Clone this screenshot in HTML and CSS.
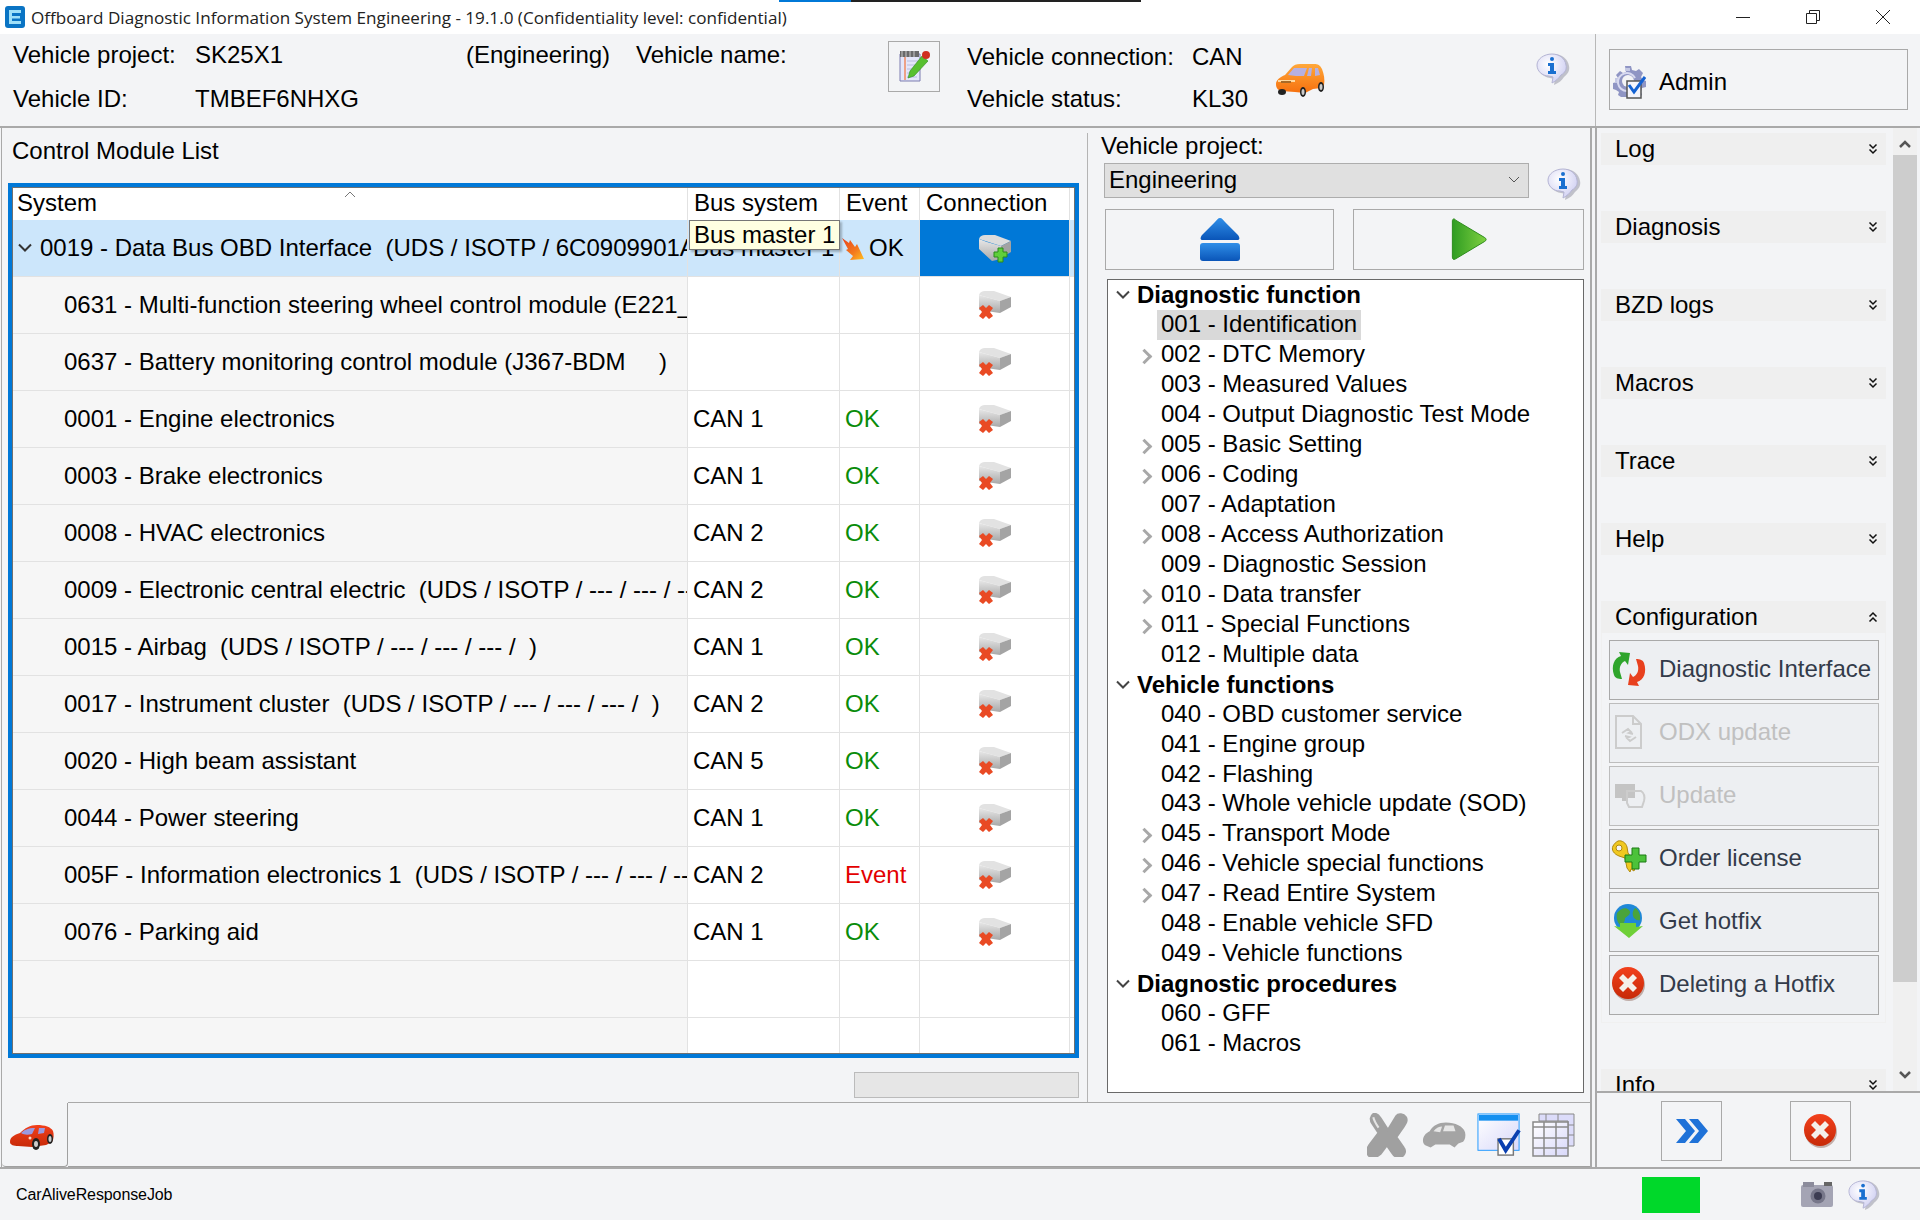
FILE: index.html
```html
<!DOCTYPE html>
<html lang="en">
<head>
    <meta charset="UTF-8">
    <title>Offboard Diagnostic Information System Engineering</title>
    <link rel="stylesheet" href="styles.css">
</head>
<body>
    <svg class="defs" width="0" height="0">
        <defs>
            <linearGradient id="gBlue" x1="0" y1="0" x2="0" y2="1"><stop offset="0" stop-color="#2f8ee8"/><stop offset="1" stop-color="#0a55b8"/></linearGradient>
            <linearGradient id="gGreen" x1="0" y1="0" x2="1" y2="0"><stop offset="0" stop-color="#2f9c22"/><stop offset="1" stop-color="#7ed040"/></linearGradient>
            <linearGradient id="gBox" x1="0" y1="0" x2="0" y2="1"><stop offset="0" stop-color="#e8e8e8"/><stop offset="1" stop-color="#a8a8a8"/></linearGradient>
            <linearGradient id="gRed" x1="0" y1="0" x2="0" y2="1"><stop offset="0" stop-color="#f2401c"/><stop offset="1" stop-color="#c72a08"/></linearGradient>
            <linearGradient id="gOrange" x1="0" y1="0" x2="0" y2="1"><stop offset="0" stop-color="#ffa83a"/><stop offset="1" stop-color="#f6700e"/></linearGradient>
            <radialGradient id="gBubble" cx="0.4" cy="0.35" r="0.7"><stop offset="0" stop-color="#fff"/><stop offset="1" stop-color="#cfcff2"/></radialGradient>
            <linearGradient id="gSheet" x1="0" y1="0" x2="1" y2="1"><stop offset="0" stop-color="#fff"/><stop offset="1" stop-color="#d8d8fa"/></linearGradient>
            <linearGradient id="gFlame" x1="0" y1="0" x2="1" y2="1"><stop offset="0" stop-color="#e8431c"/><stop offset=".6" stop-color="#f47a1e"/><stop offset="1" stop-color="#ffc020"/></linearGradient>

            <symbol id="i-info" viewBox="0 0 34 34">
                <path d="M17 2C8 2 1 7 1 14c0 6 5 11 12 12l5 1-1 6c5-2 8-5 10-8 4-3 6-7 5-11-1-7-7-12-15-12z" fill="#8e8e9e" opacity=".5" transform="translate(1 0)"/>
                <path d="M16 2C8 2 1 7 1 13c0 6 5 11 12 11l4 1-1 6c4-2 7-5 9-8 4-2 6-6 5-10-1-7-7-11-14-11z" fill="url(#gBubble)" stroke="#b4b4d4"/>
                <circle cx="16" cy="7" r="2" fill="#1a6fd0"/>
                <path d="M12 11h6v8h2v3h-8v-3h2v-5h-2z" fill="#1a6fd0"/>
            </symbol>
            <symbol id="i-box" viewBox="0 0 34 28">
                <path d="M1 5C2 2 4 1 7 1h10l16 6-10 5z" fill="#dcdcdc"/>
                <path d="M1 5l8 3 14 4v13l-9 2-13-12z" fill="url(#gBox)"/>
                <path d="M23 12l10-5v11l-10 6z" fill="#a2a2a2"/>
            </symbol>
            <symbol id="i-boxx" viewBox="0 0 34 30">
                <path d="M1 5C2 2 4 1 7 1h9l17 6-11 4z" fill="#e2e2e2"/>
                <path d="M1 5l21 6v12L1 20z" fill="url(#gBox)"/>
                <path d="M22 11l11-4v10l-11 6z" fill="#a4a4a4"/>
                <path d="M1 18l4-3 3 3 3-3 4 3-3 4 3 4-4 3-3-3-3 3-4-3 3-4z" fill="#e94a24"/>
            </symbol>
            <symbol id="i-boxplus" viewBox="0 0 34 28">
                <use href="#i-box" width="34" height="28"/>
                <path d="M20 14h5v4h4v5h-4v5h-5v-5h-4v-5h4z" fill="#5fcf3a" stroke="#2a8a1a"/>
            </symbol>
            <symbol id="i-redx" viewBox="0 0 36 36">
                <circle cx="18" cy="19" r="16" fill="#6a3020" opacity=".35"/>
                <circle cx="17" cy="17" r="16" fill="url(#gRed)"/>
                <path d="M8 12l4-4 5 5 5-5 4 4-5 5 5 5-4 4-5-5-5 5-4-4 5-5z" fill="#f4f0ea"/>
            </symbol>
            <symbol id="i-car" viewBox="0 0 50 34">
                <path d="M1 21c0-4 4-7 9-9l7-8c2-2 4-3 8-3h14c4 0 6 1 8 5 2 5 3 11 2 16l-3 3-8 1-8 4-10-1-14-1c-3-1-5-3-5-7z" fill="url(#gOrange)"/>
                <path d="M13 12l6-7h13l-3 8c-5 0-11 0-16-1zM34 5h3l-1 8h-4zM40 5h3l2 7-5 1z" fill="#b6b0e0"/>
                <path d="M3 17h17v2H3z" fill="#ffd9a0"/><path d="M6 18h10v2H6z" fill="#a86a28"/>
                <ellipse cx="7" cy="29" rx="4" ry="3" fill="#222"/><ellipse cx="28" cy="29" rx="3" ry="5" fill="#222"/><ellipse cx="46" cy="24" rx="3" ry="5" fill="#222"/>
                <ellipse cx="28" cy="29" rx="1.500" ry="3" fill="#ccc"/><ellipse cx="46" cy="24" rx="1.500" ry="3" fill="#ccc"/>
            </symbol>
            <symbol id="i-redcar" viewBox="0 0 44 26">
                <path d="M0 18c0-5 4-7 10-9 5-5 10-8 17-8 8 0 14 2 16 6 1 3 1 8-1 11l-6 3-14 2-14-1c-4 0-8-1-8-4z" fill="url(#gRed)"/>
                <path d="M11 9c3-3 7-5 14-5l-3 6c-4 1-8 1-11-1zM29 4h6l-1 5-6 1z" fill="#9a9ae0"/>
                <circle cx="20" cy="14" r="1.500" fill="#ffd8c0"/>
                <ellipse cx="26" cy="20" rx="4" ry="6" fill="#222"/><ellipse cx="40" cy="15" rx="3" ry="5" fill="#222"/>
                <ellipse cx="26" cy="20" rx="2" ry="3" fill="#ccc"/><ellipse cx="40" cy="15" rx="1.500" ry="3" fill="#ccc"/>
            </symbol>
            <symbol id="i-dchev" viewBox="0 0 10 12">
                <path d="M1.500 1.500L5 5l3.500-3.500M1.500 6.500L5 10l3.500-3.500" stroke="#111" stroke-width="1.500" fill="none"/>
            </symbol>
        </defs>
    </svg>

    <div class="progress"><span class="progress-blue"></span><span class="progress-dark"></span></div>

    <div class="titlebar">
        <svg class="logo" viewBox="0 0 20 22"><rect width="20" height="22" rx="3" fill="#0a74c4"/><path d="M4 4h12v3H7v3h8v2.500H7V15h9v3H4z" fill="#9fe0f8"/></svg>
        <span class="title-text">Offboard Diagnostic Information System Engineering - 19.1.0 (Confidentiality level: confidential)</span>
        <div class="win-btns">
            <svg class="win-btn" viewBox="0 0 16 16"><path d="M1 8.500h14" stroke="#222" fill="none"/></svg>
            <svg class="win-btn" viewBox="0 0 16 16"><path d="M1.500 4.500h10v10h-10zM4.500 4.500v-3h10v10h-3" stroke="#222" fill="none"/></svg>
            <svg class="win-btn" viewBox="0 0 16 16"><path d="M1 1l14 14M15 1L1 15" stroke="#222" fill="none"/></svg>
        </div>
    </div>

    <div class="top">
        <div class="header">
            <div class="veh-info">
                <span>Vehicle project:</span><span>SK25X1</span><span>(Engineering)</span><span>Vehicle name:</span>
                <span>Vehicle ID:</span><span>TMBEF6NHXG</span><span></span><span></span>
            </div>
            <div class="edit-btn">
                <svg viewBox="0 0 32 33" width="32" height="33">
                    <path d="M2 4h20v27H2z" fill="#e4e6fa" stroke="#7c7cb0"/>
                    <path d="M7 5v25" stroke="#f08a60" stroke-width="1.500"/>
                    <path d="M9 11h11M9 15h9M9 19h7M9 23h6M9 27h10" stroke="#b8bce0"/>
                    <path d="M2 1h19v6H2z" fill="#6a6a6a"/>
                    <path d="M4 1v6M8 1v6M12 1v6M16 1v6" stroke="#c8c8c8"/>
                    <path d="M12 21L24 6l6 5-14 15-6 2z" fill="#58c030" stroke="#2f8a1c" stroke-width=".6"/>
                    <circle cx="28" cy="5" r="4" fill="#d03020"/>
                </svg>
            </div>
            <div class="conn-info">
                <span>Vehicle connection:</span><span>CAN</span>
                <span>Vehicle status:</span><span>KL30</span>
            </div>
            <svg class="ico-car"><use href="#i-car"/></svg>
            <svg class="ico-info-top"><use href="#i-info"/></svg>
        </div>
        <div class="admin">
            <div class="admin-btn">
                <svg class="ico-admin" viewBox="0 0 34 34">
                    <path d="M13 1h6l1 4 4 1 3-2 4 4-2 4 2 3 3 1v6l-4 1-1 4 1 3-3 2-18 0-3-2 1-3-3-2-3-1v-6l4-1 1-4-2-3 4-4 3 2 3-1z" fill="#8f95c4"/>
                    <path d="M13 3h5v3h-5zM3 13h3v5H3z" fill="#c4c8e4"/>
                    <path d="M23 13a9 9 0 1 0-8 13" fill="none" stroke="#d8daf0" stroke-width="2"/>
                    <circle cx="16" cy="16" r="6" fill="#f3f4f6"/>
                    <path d="M15 16h14v17H15z" fill="#f4f4fb" stroke="#555" stroke-width="1.500"/>
                    <path d="M17 20l5 7L33 12" stroke="#1462d2" stroke-width="3" fill="none"/>
                </svg>
                <span class="admin-text">Admin</span>
            </div>
        </div>
    </div>

    <div class="main">
        <div class="left">
            <div class="work">
                <div class="list-col">
                    <div class="list-title">Control Module List</div>
                    <div class="grid">
                        <div class="grid-inner">
                            <div class="row row-head">
                                <div class="cell sys"><span>System</span><svg class="sort" viewBox="0 0 12 8"><path d="M1 7l5-5 5 5" stroke="#777" fill="none"/></svg></div>
                                <div class="cell">Bus system</div>
                                <div class="cell">Event</div>
                                <div class="cell">Connection</div>
                                <div class="cell"></div>
                            </div>
                            <div class="row row-sel">
                                <div class="cell sys first"><svg class="chev" viewBox="0 0 14 10"><path d="M1 1.500l6 6 6-6" stroke="#333" stroke-width="2" fill="none"/></svg><span>0019 - Data Bus OBD Interface  (UDS / ISOTP / 6C0909901AD</span></div>
                                <div class="cell">Bus master 1</div>
                                <div class="cell cell-ok"><svg class="flame" viewBox="0 0 22 22"><path d="M0 0l7 5 1-3 5 7 2-3 7 15-14 1 3-4-7-6 2-1z" fill="url(#gFlame)"/></svg>OK</div>
                                <div class="cell conn conn-sel"><svg class="ico-conn"><use href="#i-boxplus"/></svg></div>
                                <div class="cell"></div>
                            </div>
                            <div class="row">
                                <div class="cell sys">0631 - Multi-function steering wheel control module (E221_</div>
                                <div class="cell"></div><div class="cell"></div>
                                <div class="cell conn"><svg class="ico-conn"><use href="#i-boxx"/></svg></div><div class="cell"></div>
                            </div>
                            <div class="row">
                                <div class="cell sys">0637 - Battery monitoring control module (J367-BDM     )</div>
                                <div class="cell"></div><div class="cell"></div>
                                <div class="cell conn"><svg class="ico-conn"><use href="#i-boxx"/></svg></div><div class="cell"></div>
                            </div>
                            <div class="row">
                                <div class="cell sys">0001 - Engine electronics</div>
                                <div class="cell">CAN 1</div><div class="cell ok">OK</div>
                                <div class="cell conn"><svg class="ico-conn"><use href="#i-boxx"/></svg></div><div class="cell"></div>
                            </div>
                            <div class="row">
                                <div class="cell sys">0003 - Brake electronics</div>
                                <div class="cell">CAN 1</div><div class="cell ok">OK</div>
                                <div class="cell conn"><svg class="ico-conn"><use href="#i-boxx"/></svg></div><div class="cell"></div>
                            </div>
                            <div class="row">
                                <div class="cell sys">0008 - HVAC electronics</div>
                                <div class="cell">CAN 2</div><div class="cell ok">OK</div>
                                <div class="cell conn"><svg class="ico-conn"><use href="#i-boxx"/></svg></div><div class="cell"></div>
                            </div>
                            <div class="row">
                                <div class="cell sys">0009 - Electronic central electric  (UDS / ISOTP / --- / --- / --- /  )</div>
                                <div class="cell">CAN 2</div><div class="cell ok">OK</div>
                                <div class="cell conn"><svg class="ico-conn"><use href="#i-boxx"/></svg></div><div class="cell"></div>
                            </div>
                            <div class="row">
                                <div class="cell sys">0015 - Airbag  (UDS / ISOTP / --- / --- / --- /  )</div>
                                <div class="cell">CAN 1</div><div class="cell ok">OK</div>
                                <div class="cell conn"><svg class="ico-conn"><use href="#i-boxx"/></svg></div><div class="cell"></div>
                            </div>
                            <div class="row">
                                <div class="cell sys">0017 - Instrument cluster  (UDS / ISOTP / --- / --- / --- /  )</div>
                                <div class="cell">CAN 2</div><div class="cell ok">OK</div>
                                <div class="cell conn"><svg class="ico-conn"><use href="#i-boxx"/></svg></div><div class="cell"></div>
                            </div>
                            <div class="row">
                                <div class="cell sys">0020 - High beam assistant</div>
                                <div class="cell">CAN 5</div><div class="cell ok">OK</div>
                                <div class="cell conn"><svg class="ico-conn"><use href="#i-boxx"/></svg></div><div class="cell"></div>
                            </div>
                            <div class="row">
                                <div class="cell sys">0044 - Power steering</div>
                                <div class="cell">CAN 1</div><div class="cell ok">OK</div>
                                <div class="cell conn"><svg class="ico-conn"><use href="#i-boxx"/></svg></div><div class="cell"></div>
                            </div>
                            <div class="row">
                                <div class="cell sys">005F - Information electronics 1  (UDS / ISOTP / --- / --- / --- /  )</div>
                                <div class="cell">CAN 2</div><div class="cell event">Event</div>
                                <div class="cell conn"><svg class="ico-conn"><use href="#i-boxx"/></svg></div><div class="cell"></div>
                            </div>
                            <div class="row">
                                <div class="cell sys">0076 - Parking aid</div>
                                <div class="cell">CAN 1</div><div class="cell ok">OK</div>
                                <div class="cell conn"><svg class="ico-conn"><use href="#i-boxx"/></svg></div><div class="cell"></div>
                            </div>
                            <div class="row">
                                <div class="cell sys"></div><div class="cell"></div><div class="cell"></div><div class="cell"></div><div class="cell"></div>
                            </div>
                            <div class="row">
                                <div class="cell sys"></div><div class="cell"></div><div class="cell"></div><div class="cell"></div><div class="cell"></div>
                            </div>
                        </div>
                        <div class="tooltip">Bus master 1</div>
                    </div>
                    <div class="hbar"></div>
                </div>

                <div class="diag-col">
                    <div class="diag-label">Vehicle project:</div>
                    <div class="project-row">
                        <div class="select"><span>Engineering</span><svg class="select-arrow" viewBox="0 0 12 8"><path d="M1 1l5 5 5-5" stroke="#555" fill="none"/></svg></div>
                        <svg class="ico-info-sel"><use href="#i-info"/></svg>
                    </div>
                    <div class="diag-btns">
                        <div class="big-btn">
                            <svg viewBox="0 0 42 43" width="42" height="43"><path d="M21 0c2 0 3 2 5 4l13 13c2 3 2 5-1 5H4c-3 0-3-2-1-5L16 4c2-2 3-4 5-4z" fill="url(#gBlue)"/><rect x="1" y="25" width="40" height="18" rx="3" fill="url(#gBlue)"/></svg>
                        </div>
                        <div class="big-btn">
                            <svg viewBox="0 0 38 44" width="38" height="43"><path d="M2 3c0-2 2-3 3-1l30 18c2 1 2 3 0 4L5 42c-2 1-3 0-3-2z" fill="url(#gGreen)" stroke="#2c8a1c"/></svg>
                        </div>
                    </div>
                    <div class="tree">
                        <div class="t-group"><svg class="t-down" viewBox="0 0 14 10"><path d="M1 1.500l6 6 6-6" stroke="#444" stroke-width="2" fill="none"/></svg>Diagnostic function</div>
                        <div class="t-item"><span class="t-sel">001 - Identification</span></div>
                        <div class="t-item has-kids">002 - DTC Memory</div>
                        <div class="t-item">003 - Measured Values</div>
                        <div class="t-item">004 - Output Diagnostic Test Mode</div>
                        <div class="t-item has-kids">005 - Basic Setting</div>
                        <div class="t-item has-kids">006 - Coding</div>
                        <div class="t-item">007 - Adaptation</div>
                        <div class="t-item has-kids">008 - Access Authorization</div>
                        <div class="t-item">009 - Diagnostic Session</div>
                        <div class="t-item has-kids">010 - Data transfer</div>
                        <div class="t-item has-kids">011 - Special Functions</div>
                        <div class="t-item">012 - Multiple data</div>
                        <div class="t-group"><svg class="t-down" viewBox="0 0 14 10"><path d="M1 1.500l6 6 6-6" stroke="#444" stroke-width="2" fill="none"/></svg>Vehicle functions</div>
                        <div class="t-item">040 - OBD customer service</div>
                        <div class="t-item">041 - Engine group</div>
                        <div class="t-item">042 - Flashing</div>
                        <div class="t-item">043 - Whole vehicle update (SOD)</div>
                        <div class="t-item has-kids">045 - Transport Mode</div>
                        <div class="t-item has-kids">046 - Vehicle special functions</div>
                        <div class="t-item has-kids">047 - Read Entire System</div>
                        <div class="t-item">048 - Enable vehicle SFD</div>
                        <div class="t-item">049 - Vehicle functions</div>
                        <div class="t-group"><svg class="t-down" viewBox="0 0 14 10"><path d="M1 1.500l6 6 6-6" stroke="#444" stroke-width="2" fill="none"/></svg>Diagnostic procedures</div>
                        <div class="t-item">060 - GFF</div>
                        <div class="t-item">061 - Macros</div>
                    </div>
                </div>
            </div>

            <div class="tabbar">
                <div class="tab"><svg class="ico-redcar"><use href="#i-redcar"/></svg></div>
                <div class="tab-body">
                    <svg class="tool" viewBox="0 0 42 42"><path d="M6 1c3-1 5 1 7 4l7 11 8-13c2-3 7-2 9 1 2 3 0 6-2 9l-7 10 7 10c3 4 0 9-4 9-3 1-5-1-7-4l-5-7-6 8c-3 3-8 4-11 2-3-3-2-7 0-10l9-12L5 10C3 7 3 3 6 1z" fill="#a0a0a0" stroke="#a0a0a0" stroke-width="2"/><path d="M6 4c1 4 3 7 5 10" stroke="#e4e4e4" stroke-width="2" fill="none"/></svg>
                    <svg class="tool" viewBox="0 0 46 30"><path d="M1 21c0-5 3-8 7-10 4-6 9-9 17-9 10 0 18 4 20 10 1 4 0 8-2 10l-5 2-4 4-5-3H14l-5 3-5-2c-2-1-3-3-3-5z" fill="#a4a4a4"/><path d="M12 11c3-4 6-5 9-5l-2 6zM24 5h9l2 6H22z" fill="#e6e6e6"/></svg>
                    <svg class="tool" viewBox="0 0 46 46"><rect x="1" y="1" width="43" height="38" fill="url(#gSheet)" stroke="#1e98ff"/><rect x="2" y="2" width="41" height="6" fill="#1490f0"/><rect x="22" y="27" width="16" height="17" fill="#fff" stroke="#777" stroke-width="1.500"/><path d="M23 27l7 12L44 18" stroke="#0a3fb0" stroke-width="4" fill="none"/></svg>
                    <svg class="tool" viewBox="0 0 44 44"><path d="M7 1h35v32H36V8H7z" fill="#dcdcfa" stroke="#888"/><path d="M14 1v7M26 1v7M36 12h6M36 22h6" stroke="#888"/><rect x="1" y="9" width="35" height="34" fill="url(#gSheet)" stroke="#888" stroke-width="1.500"/><path d="M1 14h35M1 25h35M1 35h35M12 9v34M24 9v34" stroke="#8a8a8a" stroke-width="1.500"/></svg>
                </div>
            </div>
        </div>

        <div class="right">
            <div class="side-scroll">
                <div class="accordion">
                    <div class="acc-head">Log<svg class="acc-chev"><use href="#i-dchev"/></svg></div>
                    <div class="acc-head">Diagnosis<svg class="acc-chev"><use href="#i-dchev"/></svg></div>
                    <div class="acc-head">BZD logs<svg class="acc-chev"><use href="#i-dchev"/></svg></div>
                    <div class="acc-head">Macros<svg class="acc-chev"><use href="#i-dchev"/></svg></div>
                    <div class="acc-head">Trace<svg class="acc-chev"><use href="#i-dchev"/></svg></div>
                    <div class="acc-head">Help<svg class="acc-chev"><use href="#i-dchev"/></svg></div>
                    <div class="acc-head acc-open">Configuration<svg class="acc-chev up"><use href="#i-dchev"/></svg></div>
                    <div class="acc-body">
                        <div class="side-btn">
                            <svg class="ico-btn" viewBox="0 0 36 36"><path d="M3 24C0 15 3 7 10 5L8 1l11 1-2 12-3-4c-4 2-6 6-5 11l2 7c-4 0-7-1-8-4z" fill="#2fa52c"/><path d="M33 12c3 9 0 17-7 19l2 4-11-1 2-12 3 4c4-2 6-6 5-11l-2-7c4 0 7 1 8 4z" fill="#e8401e"/></svg>
                            <span>Diagnostic Interface</span>
                        </div>
                        <div class="side-btn off">
                            <svg class="ico-btn" viewBox="0 0 36 36"><path d="M5 2h17l8 8v24H5zM22 2v8h8" fill="none" stroke="#ccc" stroke-width="2"/><path d="M11 19l6-4 3 3-2 1 4 1M25 23l-6 4-3-3 2-1-4-1" stroke="#ccc" stroke-width="2" fill="none"/></svg>
                            <span>ODX update</span>
                        </div>
                        <div class="side-btn off">
                            <svg class="ico-btn" viewBox="0 0 36 36"><path d="M4 7h20v14H15v3h-4v-3H4z" fill="#c4c4c4"/><path d="M16 14h14c3 2 4 6 3 10l-2 6H18l-2-4z" fill="none" stroke="#ccc" stroke-width="2"/></svg>
                            <span>Update</span>
                        </div>
                        <div class="side-btn">
                            <svg class="ico-btn" viewBox="0 0 36 36"><path d="M7 1c4-1 8 2 9 6l1 6 8 11 2 2-3 2-1 3-3-2-1 3-3-4-2-10-6-2C3 14 0 10 2 6c1-2 3-4 5-5z" fill="#f0c820" stroke="#b08a10"/><circle cx="8" cy="8" r="3" fill="#f3f4f6" stroke="#b08a10"/><path d="M21 8h7v7h7v7h-7v7h-7v-7h-7v-7h7z" fill="#4cc23a" stroke="#1a7a12"/></svg>
                            <span>Order license</span>
                        </div>
                        <div class="side-btn">
                            <svg class="ico-btn" viewBox="0 0 36 36"><circle cx="17" cy="15" r="14" fill="#1f88d8"/><path d="M6 10c4-5 9-6 12-3s-1 6-4 8c0 5-3 7-5 7C6 19 5 14 6 10zM24 5c3 1 6 6 5 12-3 1-6-1-7-4s0-6 2-8z" fill="#4aa43c"/><path d="M9 20h16v4l7-1-14 12L3 23l6 1z" fill="#6fd038"/></svg>
                            <span>Get hotfix</span>
                        </div>
                        <div class="side-btn">
                            <svg class="ico-btn"><use href="#i-redx"/></svg>
                            <span>Deleting a Hotfix</span>
                        </div>
                    </div>
                    <div class="acc-head acc-last">Info<svg class="acc-chev"><use href="#i-dchev"/></svg></div>
                </div>
                <div class="scrollbar">
                    <svg class="sb-arrow" viewBox="0 0 14 10"><path d="M2 8l5-5 5 5" stroke="#555" stroke-width="2.500" fill="none"/></svg>
                    <div class="sb-thumb"></div>
                    <svg class="sb-arrow" viewBox="0 0 14 10"><path d="M2 2l5 5 5-5" stroke="#555" stroke-width="2.500" fill="none"/></svg>
                </div>
            </div>
            <div class="actions">
                <div class="act-btn"><svg viewBox="0 0 34 26" width="34" height="26"><path d="M1 1h9l10 12-10 12H1l10-12zM14 1h9l10 12-10 12h-9l10-12z" fill="#1f72d8"/></svg></div>
                <div class="act-btn"><svg class="ico-btn"><use href="#i-redx"/></svg></div>
            </div>
        </div>
    </div>

    <div class="status">
        <span class="status-text">CarAliveResponseJob</span>
        <div class="status-light"></div>
        <svg class="ico-camera" viewBox="0 0 34 28"><rect x="1" y="4" width="32" height="22" rx="2" fill="#a4a4b4"/><rect x="3" y="1" width="11" height="5" fill="#8c8c9c"/><rect x="24" y="1" width="8" height="4" fill="#666"/><circle cx="18" cy="15" r="7.500" fill="#77778a"/><circle cx="18" cy="15" r="4" fill="#3c3c52"/></svg>
        <svg class="ico-info-status"><use href="#i-info"/></svg>
    </div>
</body>
</html>
```

FILE: styles.css
```css
/* Global */
* {
    box-sizing: border-box;
}

body {
    margin: 0;
    width: 1920px;
    height: 1220px;
    overflow: hidden;
    position: relative;
    background: #f3f4f6;
    font-family: "Liberation Sans", Arial, sans-serif;
    font-size: 24px;
    color: #000;
}

.defs {
    position: absolute;
}

/* Title bar */
.progress {
    position: absolute;
    top: 0;
    left: 779px;
    display: flex;
    height: 2px;
}

.progress-blue {
    width: 72px;
    background: #0078d7;
}

.progress-dark {
    width: 290px;
    background: #222;
}

.titlebar {
    height: 34px;
    background: #fff;
    display: flex;
    align-items: center;
    padding-left: 5px;
}

.logo {
    width: 20px;
    height: 22px;
    margin-right: 6px;
}

.title-text {
    font-family: "Open Sans", sans-serif;
    font-size: 17.1px;
    color: #222;
}

.win-btns {
    margin-left: auto;
    display: flex;
    gap: 54px;
    padding-right: 29px;
}

.win-btn {
    width: 16px;
    height: 16px;
}

/* Vehicle header */
.top {
    height: 94px;
    display: flex;
    border-bottom: 2px solid #a9a9a9;
}

.header {
    width: 1596px;
    display: flex;
    position: relative;
    border-right: 1px solid #b8b8b8;
}

.veh-info {
    display: grid;
    grid-template-columns: 182px 271px 170px 252px;
    grid-template-rows: 40px 40px;
    row-gap: 4px;
    padding: 1px 0 0 13px;
    width: 888px;
    align-items: center;
}

.edit-btn {
    width: 52px;
    height: 51px;
    margin-top: 7px;
    border: 1px solid #a9a9a9;
    display: flex;
    align-items: center;
    justify-content: center;
}

.conn-info {
    display: grid;
    grid-template-columns: 225px 60px;
    grid-template-rows: 40px 40px;
    row-gap: 2px;
    padding: 3px 0 0 27px;
    align-items: center;
}

.ico-car {
    position: absolute;
    left: 1275px;
    top: 29px;
    width: 50px;
    height: 34px;
}

.ico-info-top {
    position: absolute;
    left: 1536px;
    top: 18px;
    width: 34px;
    height: 34px;
}

.admin {
    flex: 1;
    padding: 15px 12px 0 13px;
}

.admin-btn {
    height: 61px;
    border: 1px solid #a9a9a9;
    display: flex;
    align-items: center;
    gap: 13px;
    padding-left: 2px;
}

.ico-admin {
    width: 34px;
    height: 34px;
    flex: none;
    margin-top: 4px;
}

.admin-text {
    padding-top: 4px;
}

.ico-btn {
    width: 36px;
    height: 36px;
    flex: none;
}

/* Main layout */
.main {
    height: 1041px;
    display: flex;
    border-bottom: 2px solid #a9a9a9;
}

.left {
    width: 1591px;
    margin-left: 1px;
    display: flex;
    flex-direction: column;
    border-right: 2px solid #a9a9a9;
    border-left: 1px solid #a9a9a9;
}

.work {
    height: 974px;
    display: flex;
}

/* Control module list */
.list-col {
    width: 1086px;
    padding: 0 6px;
    border-right: 1px solid #b4b4b4;
    margin-top: 5px;
}

.list-title {
    height: 50px;
    padding: 4px 0 0 4px;
    line-height: 28px;
}

.grid {
    position: relative;
    width: 1071px;
    height: 875px;
    border: 4px solid #0078d7;
}

.grid-inner {
    height: 100%;
    overflow: hidden;
    border: 1px solid #707070;
    background: #fff;
}

.row {
    display: grid;
    grid-template-columns: 675px 152px 80px 150px 4px;
    height: 57px;
    background: #fff;
}

.cell {
    display: flex;
    align-items: center;
    padding-left: 5px;
    overflow: hidden;
    white-space: pre;
    border-right: 1px solid #e2e2e2;
    border-bottom: 1px solid #e2e2e2;
}

.cell:last-child {
    border-right: none;
    padding: 0;
}

.cell.sys {
    padding-left: 51px;
    background: #f6f6f6;
}

.ok {
    color: #0a8c0a;
}

.event {
    color: #e30000;
}

.row-head {
    height: 32px;
}

.row-head .cell {
    background: #fff;
    border-bottom: none;
    padding-bottom: 2px;
    padding-left: 6px;
}

.row-head .cell.sys {
    position: relative;
    padding-left: 4px;
    background: #fff;
}

.sort {
    position: absolute;
    left: 331px;
    top: 2px;
    width: 12px;
    height: 8px;
}

.row-sel {
    background: #cce6fb;
}

.row-sel .cell {
    background: #cce6fb;
}

.row-sel .cell.first {
    padding-left: 5px;
    background: #cce6fb;
}

.chev {
    width: 14px;
    height: 10px;
    margin-right: 8px;
    flex: none;
}

.cell-ok {
    padding-left: 2px;
}

.flame {
    width: 22px;
    height: 22px;
    margin-right: 5px;
    margin-top: 2px;
    flex: none;
}

.conn {
    justify-content: center;
    padding: 0;
}

.conn-sel {
    background: #0078d7 !important;
}

.ico-conn {
    width: 34px;
    height: 30px;
}

.tooltip {
    position: absolute;
    left: 677px;
    top: 33px;
    padding: 0 4px;
    height: 30px;
    line-height: 28px;
    background: #ffffe1;
    border: 1px solid #767676;
    box-shadow: 2px 2px 2px rgba(0, 0, 0, 0.25);
}

.hbar {
    width: 225px;
    height: 26px;
    margin: 14px 0 0 846px;
    background: #e6e6e6;
    border: 1px solid #bbb;
}

/* Diagnostic column */
.diag-col {
    flex: 1;
    padding: 4px 5px 0 13px;
}

.diag-label {
    height: 31px;
    line-height: 28px;
}

.project-row {
    display: flex;
    margin-left: 3px;
    height: 46px;
}

.select {
    width: 425px;
    height: 35px;
    background: #e0e0e0;
    border: 1px solid #adadad;
    display: flex;
    align-items: center;
    justify-content: space-between;
    padding: 0 8px 2px 4px;
}

.select-arrow {
    width: 12px;
    height: 8px;
}

.ico-info-sel {
    width: 34px;
    height: 34px;
    margin: 4px 0 0 18px;
}

.diag-btns {
    display: flex;
    gap: 19px;
    margin-left: 4px;
}

.big-btn {
    width: 229px;
    height: 61px;
    border: 1px solid #a9a9a9;
    display: flex;
    align-items: center;
    justify-content: center;
}

.big-btn + .big-btn {
    width: 231px;
}

.tree {
    margin: 9px 0 0 6px;
    width: 477px;
    height: 814px;
    background: #fff;
    border: 1px solid #696969;
}

.t-group,
.t-item {
    height: 29.97px;
    line-height: 30px;
    white-space: nowrap;
    position: relative;
}

.t-group {
    font-weight: bold;
    padding-left: 29px;
}

.t-down {
    position: absolute;
    left: 8px;
    top: 10px;
    width: 14px;
    height: 10px;
}

.t-item {
    padding-left: 53px;
    line-height: 28px;
}

.t-sel {
    display: inline-block;
    height: 30px;
    margin-left: -4px;
    padding: 0 4px;
    background: #d9d9d9;
}

.has-kids::before {
    content: "";
    position: absolute;
    left: 31px;
    top: 11px;
    width: 8px;
    height: 8px;
    border-top: 3px solid #a8a8a8;
    border-right: 3px solid #a8a8a8;
    transform: rotate(45deg);
}

/* Bottom tab bar */
.tabbar {
    flex: 1;
    display: flex;
    align-items: flex-end;
}

.tab {
    width: 66px;
    height: 64px;
    display: flex;
    align-items: center;
    justify-content: center;
    padding-right: 5px;
    border-bottom: 1px solid #a0a0a0;
    border-right: 1px solid #a0a0a0;
    border-radius: 0 0 4px 4px;
}

.ico-redcar {
    width: 44px;
    height: 26px;
    margin-top: 5px;
}

.tab-body {
    flex: 1;
    height: 65px;
    border-top: 1px solid #a9a9a9;
    border-bottom: 1px solid #a0a0a0;
    display: flex;
    justify-content: flex-end;
    align-items: center;
    gap: 11px;
    padding-right: 14px;
}

.tool {
    width: 44px;
    height: 44px;
}

/* Right side panel */
.right {
    flex: 1;
    margin-left: 3px;
    border-left: 2px solid #a9a9a9;
    display: flex;
    flex-direction: column;
}

.side-scroll {
    height: 965px;
    display: flex;
    overflow: hidden;
    border-bottom: 2px solid #a9a9a9;
}

.accordion {
    width: 296px;
    padding: 5px 7px 0 4px;
    overflow: hidden;
}

.acc-head {
    height: 32px;
    line-height: 32px;
    background: #efefef;
    padding-left: 14px;
    margin-bottom: 46px;
    position: relative;
}

.acc-chev {
    position: absolute;
    right: 8px;
    top: 10px;
    width: 10px;
    height: 12px;
}

.acc-chev.up {
    transform: scaleY(-1);
}

.acc-open {
    margin-bottom: 0;
}

.acc-body {
    padding: 7px 6px 7px 7px;
    display: flex;
    flex-direction: column;
    gap: 3px;
    margin-bottom: 46px;
    border: 1px solid #f0f0f0;
    border-top: none;
}

.side-btn {
    height: 60px;
    background: #edeff2;
    border: 1px solid #a9a9a9;
    display: flex;
    align-items: center;
    gap: 12px;
    padding-left: 1px;
    padding-bottom: 2px;
    color: #333b4a;
}

.side-btn.off {
    color: #c0c0c0;
    border-color: #bdbdbd;
}

.scrollbar {
    width: 24px;
    margin-left: 0;
    background: #f0f0f0;
    display: flex;
    flex-direction: column;
    align-items: center;
    justify-content: space-between;
    padding: 11px 0;
    position: relative;
}

.sb-arrow {
    width: 14px;
    height: 10px;
}

.sb-thumb {
    position: absolute;
    top: 27px;
    left: 0;
    width: 100%;
    height: 827px;
    background: #cdcdcd;
}

.actions {
    flex: 1;
    display: flex;
    gap: 68px;
    padding: 8px 0 0 64px;
}

.act-btn {
    width: 61px;
    height: 60px;
    border: 1px solid #a9a9a9;
    display: flex;
    align-items: center;
    justify-content: center;
}

/* Status bar */
.status {
    height: 51px;
    display: flex;
    align-items: center;
    padding-left: 16px;
}

.status-text {
    font-size: 16px;
    letter-spacing: -0.1px;
    width: 1626px;
}

.status-light {
    width: 58px;
    height: 36px;
    background: #00d82a;
}

.ico-camera {
    width: 34px;
    height: 30px;
    margin-left: 100px;
}

.ico-info-status {
    width: 32px;
    height: 32px;
    margin-left: 14px;
}
```
